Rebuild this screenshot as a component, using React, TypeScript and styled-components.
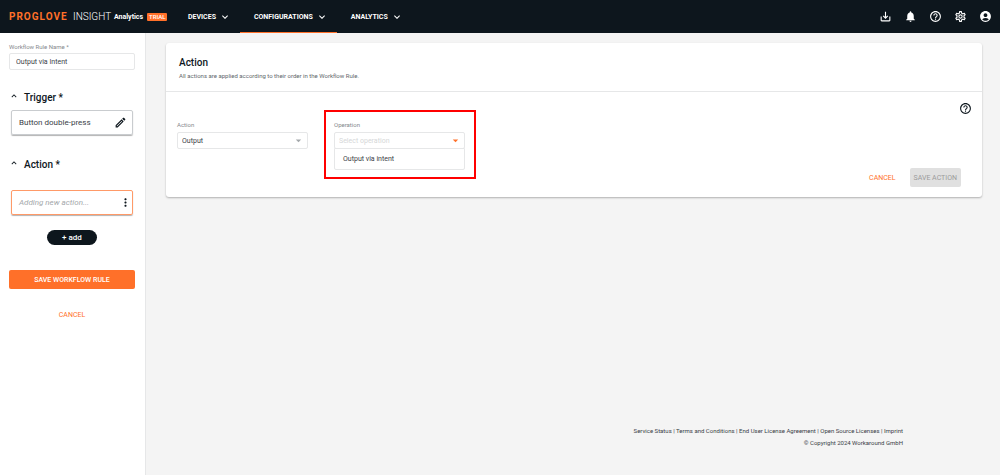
import React from "react";
import styled, { createGlobalStyle } from "styled-components";
import {
  MdSaveAlt,
  MdNotifications,
  MdHelpOutline,
  MdOutlineSettings,
  MdAccountCircle,
  MdOutlineEdit,
  MdMoreVert,
  MdArrowDropDown,
  MdKeyboardArrowDown,
  MdKeyboardArrowUp,
} from "react-icons/md";

const color = {
  ink: "#0d161d",
  text: "#3a4147",
  muted: "#85898d",
  orange: "#ff7029",
  line: "#e6e7e8",
  page: "#f4f4f4",
};

const GlobalStyle = createGlobalStyle`
  *, *::before, *::after { box-sizing: border-box; }
  body {
    margin: 0;
    background: ${color.page};
    color: ${color.text};
    font-family: Roboto, "Liberation Sans", sans-serif;
    font-size: 8px;
    line-height: 12px;
  }
  button, input, select { font: inherit; color: inherit; margin: 0; }
  button { border: 0; background: none; padding: 0; cursor: pointer; }
  h1, h2, p, ul { margin: 0; padding: 0; }
  svg { display: block; }
`;

const Page = styled.div`
  display: flex;
  flex-direction: column;
  min-height: 100vh;
`;

const TopBar = styled.header`
  display: flex;
  align-items: stretch;
  height: 33px;
  padding: 0 8px 0 9px;
  background: ${color.ink};
  color: #fff;
`;

const Brand = styled.a`
  display: flex;
  align-items: center;
  width: 165px;
  color: #fff;
  text-decoration: none;
  white-space: nowrap;
`;

const BrandName = styled.span`
  color: ${color.orange};
  font-size: 10px;
  font-weight: 700;
  letter-spacing: 1px;
  width: 64px;
`;

const BrandProduct = styled.span`
  font-size: 10px;
  font-weight: 300;
  width: 41px;
`;

const BrandModule = styled.span`
  font-size: 7px;
  font-weight: 700;
  width: 33px;
`;

const TrialBadge = styled.span`
  padding: 0 2px;
  border-radius: 1px;
  background: ${color.orange};
  font-size: 6px;
  font-weight: 500;
  line-height: 8px;
`;

const Nav = styled.nav`
  display: flex;
`;

const NavItem = styled.button<{ $active?: boolean }>`
  display: flex;
  align-items: center;
  gap: 3px;
  padding: 0 9px 0 14px;
  font-size: 7px;
  font-weight: 700;
  border-bottom: 1px solid ${(p) => (p.$active ? color.orange : color.ink)};
  border-top: 1px solid ${color.ink};
`;

const Tools = styled.div`
  display: flex;
  align-items: center;
  gap: 12px;
  margin-left: auto;
`;

const IconButton = styled.button`
  display: grid;
  place-items: center;
`;

const Body = styled.div`
  display: flex;
  flex: 1;
`;

const Sidebar = styled.aside`
  display: flex;
  flex-direction: column;
  flex: 0 0 146px;
  padding: 8px 10px 0 9px;
  background: #fff;
  border-right: 1px solid ${color.line};
`;

const Label = styled.label`
  display: block;
  color: ${color.muted};
  font-size: 6px;
  line-height: 12px;
`;

const TextInput = styled.input`
  width: 100%;
  height: 17px;
  padding: 0 6px;
  border: 1px solid ${color.line};
  border-radius: 2px;
  background: #fff;
  font-size: 7px;
`;

const SectionToggle = styled.button`
  display: flex;
  align-items: center;
  gap: 5px;
  height: 16px;
  font-size: 10px;
  font-weight: 500;
  color: ${color.ink};

  svg { margin-bottom: 4px; }
`;

const SectionTitle = styled.h2`
  margin-top: 20px;
  font-size: 10px;
  line-height: 16px;
`;

const RuleCard = styled.div<{ $pending?: boolean }>`
  display: flex;
  align-items: center;
  justify-content: space-between;
  height: 25px;
  margin: ${(p) => (p.$pending ? "17px" : "4px")} 2px 2px;
  padding: 0 ${(p) => (p.$pending ? "0" : "5px")} 0 7px;
  border: 1px solid ${(p) => (p.$pending ? "#ff9a68" : "#c9cccf")};
  border-radius: 2px;
  box-shadow: 0 1px 1px rgba(0, 0, 0, 0.3);
  color: ${(p) => (p.$pending ? "#a4a8ab" : color.text)};
  font-size: 8px;
  font-style: ${(p) => (p.$pending ? "italic" : "normal")};

  svg { color: ${color.ink}; }
`;

const AddButton = styled.button`
  align-self: center;
  width: 50px;
  height: 15px;
  margin-top: 13px;
  border-radius: 8px;
  background: ${color.ink};
  color: #fff;
  font-size: 8px;
  font-weight: 500;
`;

const Button = styled.button<{ $variant?: "primary" | "disabled"; $light?: boolean }>`
  height: 19px;
  padding: 0 4px;
  border-radius: 2px;
  font-size: 7px;
  font-weight: ${(p) => (p.$light ? 400 : 500)};
  background: ${(p) =>
    p.$variant === "primary" ? color.orange : p.$variant === "disabled" ? "#e0e0e0" : "transparent"};
  color: ${(p) =>
    p.$variant === "primary" ? "#fff" : p.$variant === "disabled" ? "#9b9b9b" : color.orange};
`;

const SidebarActions = styled.div`
  display: flex;
  flex-direction: column;
  gap: 16px;
  margin-top: 25px;
`;

const Main = styled.main`
  display: flex;
  flex: 1;
  flex-direction: column;
  min-width: 0;
  padding: 10px 18px 26px 20px;
`;

const Panel = styled.section`
  border-radius: 3px;
  background: #fff;
  box-shadow: 0 1px 2px rgba(0, 0, 0, 0.28);
`;

const PanelHeader = styled.header`
  padding: 13px 13px 10px;
  border-bottom: 1px solid ${color.line};
`;

const PanelTitle = styled.h1`
  font-size: 10px;
  font-weight: 500;
  line-height: 14px;
  color: ${color.ink};
`;

const PanelText = styled.p`
  font-size: 6px;
  line-height: 11px;
  color: #62676b;
`;

const PanelBody = styled.form`
  display: flex;
  flex-direction: column;
  padding: 10px 10px 10px 11px;
`;

const Help = styled(IconButton)`
  align-self: flex-end;
  color: ${color.ink};
`;

const Fields = styled.div`
  display: flex;
  gap: 26px;
  margin-top: 4px;
`;

const Field = styled.div`
  position: relative;
  width: 131px;
`;

const SelectWrap = styled.div<{ $open?: boolean }>`
  display: grid;
  align-items: center;
  margin-top: 1px;

  select, svg { grid-area: 1 / 1; }
  svg {
    justify-self: end;
    margin-right: 3px;
    pointer-events: none;
    color: ${(p) => (p.$open ? color.orange : "#a4a8ab")};
  }
`;

const Select = styled.select<{ $empty?: boolean }>`
  appearance: none;
  width: 100%;
  height: 17px;
  padding: 0 4px;
  border: 1px solid ${color.line};
  border-radius: 2px;
  background: #fff;
  color: ${(p) => (p.$empty ? "#d5d7d8" : color.text)};
  font-size: 7px;
`;

const Menu = styled.ul`
  position: absolute;
  top: 100%;
  left: 0;
  right: 0;
  margin-top: -1px;
  border: 1px solid ${color.line};
  border-radius: 0 0 2px 2px;
  background: #fff;
  list-style: none;
`;

const MenuItem = styled.li`
  padding: 0 8px;
  font-size: 7px;
  line-height: 20px;
`;

const Highlight = styled.div`
  position: absolute;
  inset: -9px -11px -30px -10px;
  border: 2px solid #ff0000;
  pointer-events: none;
`;

const FormActions = styled.div`
  display: flex;
  justify-content: flex-end;
  gap: 10px;
  margin-top: 19px;
  padding-right: 11px;
`;

const Footer = styled.footer`
  margin-top: auto;
  padding-right: 79px;
  text-align: right;
  font-size: 6px;
  line-height: 12px;

  a { color: inherit; text-decoration: none; }
`;

const footerLinks = [
  "Service Status",
  "Terms and Conditions",
  "End User License Agreement",
  "Open Source Licenses",
  "Imprint",
];

const navItems = ["DEVICES", "CONFIGURATIONS", "ANALYTICS"];

const tools = [
  { label: "Downloads", Icon: MdSaveAlt },
  { label: "Notifications", Icon: MdNotifications },
  { label: "Help", Icon: MdHelpOutline },
  { label: "Settings", Icon: MdOutlineSettings },
  { label: "Account", Icon: MdAccountCircle },
];

export default function App() {
  return (
    <Page>
      <GlobalStyle />
      <TopBar>
        <Brand href="#">
          <BrandName>PROGLOVE</BrandName>
          <BrandProduct>INSIGHT</BrandProduct>
          <BrandModule>Analytics</BrandModule>
          <TrialBadge>TRIAL</TrialBadge>
        </Brand>
        <Nav>
          {navItems.map((item) => (
            <NavItem key={item} type="button" $active={item === "CONFIGURATIONS"}>
              {item}
              <MdKeyboardArrowDown size={12} />
            </NavItem>
          ))}
        </Nav>
        <Tools>
          {tools.map(({ label, Icon }) => (
            <IconButton key={label} type="button" aria-label={label}>
              <Icon size={13} />
            </IconButton>
          ))}
        </Tools>
      </TopBar>
      <Body>
        <Sidebar>
          <Label htmlFor="rule-name">Workflow Rule Name *</Label>
          <TextInput id="rule-name" defaultValue="Output via Intent" />
          <SectionTitle>
            <SectionToggle type="button">
              <MdKeyboardArrowUp size={10} />
              Trigger *
            </SectionToggle>
          </SectionTitle>
          <RuleCard>
            Button double-press
            <IconButton type="button" aria-label="Edit trigger">
              <MdOutlineEdit size={13} />
            </IconButton>
          </RuleCard>
          <SectionTitle>
            <SectionToggle type="button">
              <MdKeyboardArrowUp size={10} />
              Action *
            </SectionToggle>
          </SectionTitle>
          <RuleCard $pending>
            Adding new action...
            <IconButton type="button" aria-label="Action options">
              <MdMoreVert size={13} />
            </IconButton>
          </RuleCard>
          <AddButton type="button">+ add</AddButton>
          <SidebarActions>
            <Button type="button" $variant="primary">SAVE WORKFLOW RULE</Button>
            <Button type="button" $light>CANCEL</Button>
          </SidebarActions>
        </Sidebar>
        <Main>
          <Panel>
            <PanelHeader>
              <PanelTitle>Action</PanelTitle>
              <PanelText>All actions are applied according to their order in the Workflow Rule.</PanelText>
            </PanelHeader>
            <PanelBody>
              <Help type="button" aria-label="Help with actions">
                <MdHelpOutline size={13} />
              </Help>
              <Fields>
                <Field>
                  <Label htmlFor="action">Action</Label>
                  <SelectWrap>
                    <Select id="action" defaultValue="output">
                      <option value="output">Output</option>
                    </Select>
                    <MdArrowDropDown size={13} />
                  </SelectWrap>
                </Field>
                <Field>
                  <Label htmlFor="operation">Operation</Label>
                  <SelectWrap $open>
                    <Select id="operation" defaultValue="" $empty>
                      <option value="">Select operation</option>
                      <option value="intent">Output via intent</option>
                    </Select>
                    <MdArrowDropDown size={13} />
                  </SelectWrap>
                  <Menu>
                    <MenuItem>Output via intent</MenuItem>
                  </Menu>
                  <Highlight />
                </Field>
              </Fields>
              <FormActions>
                <Button type="button" $light>CANCEL</Button>
                <Button type="button" $variant="disabled" $light disabled>SAVE ACTION</Button>
              </FormActions>
            </PanelBody>
          </Panel>
          <Footer>
            <p>
              {footerLinks.map((link, i) => (
                <React.Fragment key={link}>
                  {i > 0 && " | "}
                  <a href="#">{link}</a>
                </React.Fragment>
              ))}
            </p>
            <p>© Copyright 2024 Workaround GmbH</p>
          </Footer>
        </Main>
      </Body>
    </Page>
  );
}
